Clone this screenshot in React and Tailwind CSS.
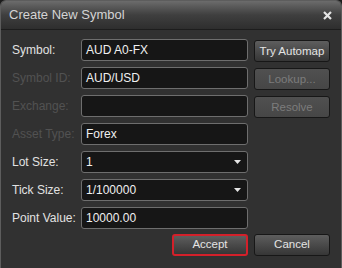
const rows = [
  { label: "Symbol:", value: "AUD A0-FX", button: "Try Automap" },
  { label: "Symbol ID:", value: "AUD/USD", disabled: true, button: "Lookup...", btnDisabled: true },
  { label: "Exchange:", value: "", disabled: true, button: "Resolve", btnDisabled: true },
  { label: "Asset Type:", value: "Forex", disabled: true },
  { label: "Lot Size:", value: "1", select: true },
  { label: "Tick Size:", value: "1/100000", select: true },
  { label: "Point Value:", value: "10000.00" },
];

function Button({ children, disabled, accent }) {
  return (
    <button
      className={`h-[22px] w-[76px] rounded-[3px] text-[11.5px] ${
        accent
          ? "border-2 border-[#d3202a]"
          : "border border-[#171717]"
      } ${
        disabled
          ? "bg-gradient-to-b from-[#505050] to-[#464646] text-[#7c7c7c]"
          : "bg-gradient-to-b from-[#5e5e5e] to-[#363636] text-[#e4e4e4]"
      }`}
    >
      {children}
    </button>
  );
}

export default function App() {
  return (
    <div
      className="w-[342px] h-[268px] bg-[#1c1c1c] overflow-hidden"
      style={{ fontFamily: "'Liberation Sans', Arial, sans-serif" }}
    >
      <div className="h-full rounded-t-[6px] border-x border-t border-[#5d5d5d] bg-[#313131] flex flex-col">
        {/* Title bar */}
        <div className="h-[29px] shrink-0 rounded-t-[5px] bg-gradient-to-b from-[#6c6c6c] via-[#3f3f3f] to-[#2e2e2e] border-b border-[#1d1d1d] flex items-center justify-between pl-[8px] pr-[9px]">
          <span className="text-[13px] text-[#d4d4d4]">Create New Symbol</span>
          <svg width="9" height="9" viewBox="0 0 9 9">
            <path d="M1 1L8 8M8 1L1 8" stroke="#e4e4e4" strokeWidth="2.2" />
          </svg>
        </div>

        {/* Body */}
        <div className="flex flex-col gap-[6px] pt-[9px] pl-[11px] pr-[11px]">
          {rows.map((r) => (
            <div key={r.label} className="flex items-center h-[22px]">
              <span
                className={`w-[69px] text-[12px] ${
                  r.disabled ? "text-[#525252]" : "text-[#e2e2e2]"
                }`}
              >
                {r.label}
              </span>
              <div className="w-[167px] h-[22px] rounded-[3px] border border-[#6e6e6e] bg-[#161616] flex items-center justify-between pl-[4px] pr-[6px]">
                <span className="text-[12px] text-[#f0f0f0]">{r.value}</span>
                {r.select && (
                  <svg width="7" height="4" viewBox="0 0 7 4">
                    <path d="M0 0H7L3.5 4Z" fill="#e6e6e6" />
                  </svg>
                )}
              </div>
              {r.button && (
                <div className="ml-[6px]">
                  <Button disabled={r.btnDisabled}>{r.button}</Button>
                </div>
              )}
            </div>
          ))}

          {/* Footer buttons */}
          <div className="flex justify-end gap-[6px] mt-[-1px]">
            <Button accent>Accept</Button>
            <Button>Cancel</Button>
          </div>
        </div>
      </div>
    </div>
  );
}
